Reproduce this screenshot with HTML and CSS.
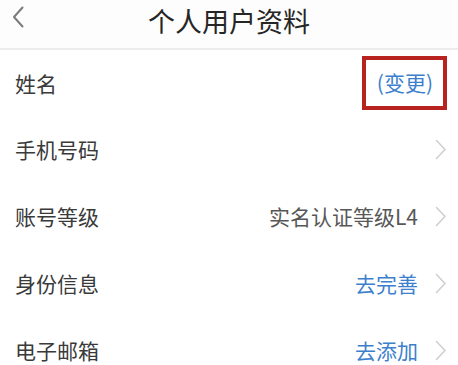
FILE: index.html
```html
<!DOCTYPE html>
<html lang="zh-CN">
<head>
<meta charset="utf-8">
<title>个人用户资料</title>
<link rel="stylesheet" href="styles.css">
</head>
<body>
<div class="page">
  <header class="topbar">
    <span class="back">
      <svg width="12" height="22" viewBox="0 0 12 22"><polyline points="10.5,1.5 2,11 10.5,20.5" fill="none" stroke="#7a7a7a" stroke-width="2" stroke-linejoin="round" stroke-linecap="round"/></svg>
    </span>
    <h1 class="title">个人用户资料</h1>
  </header>
  <ul class="list">
    <li class="row">
      <span class="label">姓名</span>
      <span class="mark"><span class="value link">(变更)</span></span>
    </li>
    <li class="row">
      <span class="label">手机号码</span>
      <span class="side">
        <svg class="chev" width="12" height="21" viewBox="0 0 12 21"><polyline points="1.5,1.5 10,10.5 1.5,19.5" fill="none" stroke="#cfcfcf" stroke-width="1.6" stroke-linejoin="round" stroke-linecap="round"/></svg>
      </span>
    </li>
    <li class="row">
      <span class="label">账号等级</span>
      <span class="side">
        <span class="value">实名认证等级L4</span>
        <svg class="chev" width="12" height="21" viewBox="0 0 12 21"><polyline points="1.5,1.5 10,10.5 1.5,19.5" fill="none" stroke="#cfcfcf" stroke-width="1.6" stroke-linejoin="round" stroke-linecap="round"/></svg>
      </span>
    </li>
    <li class="row">
      <span class="label">身份信息</span>
      <span class="side">
        <span class="value link">去完善</span>
        <svg class="chev" width="12" height="21" viewBox="0 0 12 21"><polyline points="1.5,1.5 10,10.5 1.5,19.5" fill="none" stroke="#cfcfcf" stroke-width="1.6" stroke-linejoin="round" stroke-linecap="round"/></svg>
      </span>
    </li>
    <li class="row">
      <span class="label">电子邮箱</span>
      <span class="side">
        <span class="value link">去添加</span>
        <svg class="chev" width="12" height="21" viewBox="0 0 12 21"><polyline points="1.5,1.5 10,10.5 1.5,19.5" fill="none" stroke="#cfcfcf" stroke-width="1.6" stroke-linejoin="round" stroke-linecap="round"/></svg>
      </span>
    </li>
  </ul>
</div>
</body>
</html>
```
FILE: styles.css
```css
html, body {
  margin: 0;
  padding: 0;
  background: #ffffff;
}
body {
  font-family: "Noto Sans CJK SC", "Noto Sans", "Liberation Sans", sans-serif;
  color: #3a3a3a;
}
.page {
  width: 458px;
  height: 365px;
  overflow: hidden;
}
.topbar {
  position: relative;
  height: 48px;
  border-bottom: 2px solid #ececec;
  display: flex;
  align-items: center;
  justify-content: center;
  background: #fdfdfd;
}
.back {
  position: absolute;
  left: 12px;
  top: 6px;
  display: flex;
}
.title {
  margin: 0;
  margin-top: -8px;
  font-size: 27px;
  font-weight: 400;
  color: #262626;
}
.list {
  list-style: none;
  margin: 0;
  padding: 0;
}
.row {
  height: 67px;
  display: flex;
  align-items: center;
  justify-content: space-between;
  padding: 0 11px 0 15px;
}
.row:first-child {
  height: 66px;
}
.label {
  font-size: 21px;
  color: #3a3a3a;
  line-height: 1;
}
.side {
  display: flex;
  align-items: center;
  gap: 17px;
}
.value {
  font-size: 21px;
  color: #575757;
  line-height: 1;
}
.link {
  color: #3d7fcc;
}
.mark {
  height: 46px;
  border: 4px solid #b8221f;
  padding: 0 10px 0 11px;
  display: flex;
  align-items: center;
  margin-top: -1px;
}
.chev {
  display: block;
}
```
